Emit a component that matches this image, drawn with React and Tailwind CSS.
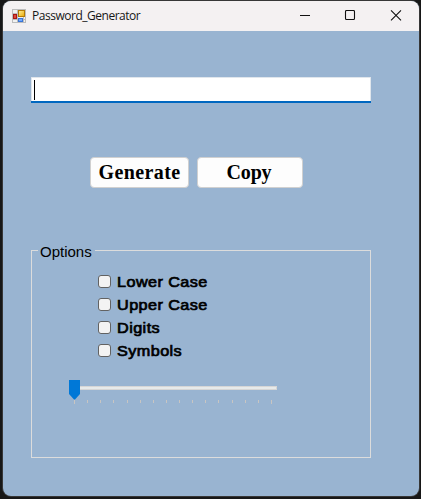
const OPTIONS = ['Lower Case', 'Upper Case', 'Digits', 'Symbols'];

function FormIcon() {
  return (
    <svg className="mb-[1px] h-[14px] w-[14px] shrink-0" viewBox="0 0 14 14">
      <defs>
        <linearGradient id="gold" x1="0" y1="0" x2="1" y2="1">
          <stop offset="0" stopColor="#fff0a0" />
          <stop offset="1" stopColor="#e8a800" />
        </linearGradient>
      </defs>
      <rect x="0.5" y="0.5" width="13" height="13" fill="#f1f1f1" stroke="#bcbcbc" />
      <path d="M5.5 0v14M0 4.5h6M0 10.5h14M11.5 8v6" stroke="#bcbcbc" fill="none" />
      <rect x="1.5" y="5.5" width="3" height="4" fill="#db4938" stroke="#a81717" />
      <rect x="6.5" y="1.5" width="6" height="6" fill="url(#gold)" stroke="#b47b07" />
      <rect x="6.5" y="9.5" width="4" height="3" fill="#71a9ff" stroke="#3a75d7" />
    </svg>
  );
}

function TitleBar() {
  return (
    <header className="flex h-[30px] shrink-0 items-center bg-[#f4f1f2] pl-[9px]">
      <FormIcon />
      <span className="ml-[6px] font-['Open_Sans','Noto_Sans',sans-serif] text-[12px] leading-[30px] tracking-[-0.48px] text-[#171717]">
        Password_Generator
      </span>
      <div className="ml-auto flex h-full items-center pr-[17px]">
        <svg className="h-3 w-[12px]" viewBox="0 0 12 12" fill="none" stroke="#111">
          <path d="M1 5.5h10" />
        </svg>
        <svg className="ml-[33px] h-3 w-3" viewBox="0 0 12 12" fill="none" stroke="#111" strokeWidth="1.1">
          <rect x="1.5" y="0.5" width="9" height="9" rx="1" />
        </svg>
        <svg className="ml-[34px] h-3 w-3" viewBox="0 0 12 12" fill="none" stroke="#111" strokeWidth="1.1">
          <path d="M1 0.4l10 10M11 0.4L1 10.4" />
        </svg>
      </div>
    </header>
  );
}

function Slider() {
  return (
    <div className="ml-[37px] mt-[18px] w-[209px]">
      <div className="flex h-[20px]">
        <svg className="h-[20px] w-[11px]" viewBox="0 0 11 20">
          <path d="M0 0h11v14l-5 5.5h-1L0 14z" fill="#0078d7" />
        </svg>
        <div className="mt-[6px] h-1 w-[197px] border border-l-0 border-[#d6d6d6] bg-[#e7eaea]" />
      </div>
      <svg className="h-[5px] w-[209px]" viewBox="0 0 209 5" shapeRendering="crispEdges">
        {Array.from({ length: 16 }, (_, i) => (
          <rect
            key={i}
            x={5 + Math.round((i * 197) / 15)}
            y="0"
            width="1"
            height={i === 0 || i === 15 ? 4 : 3}
            fill="#c8c5c2"
          />
        ))}
      </svg>
    </div>
  );
}

export default function App() {
  return (
    <div className="h-[499px] w-[421px] bg-[#171717] pl-[2px]">
      <div className="h-[497px] w-[418px] rounded-[9px] border border-t-0 border-[#373737] bg-[#373737] pt-[1px]">
        <div className="flex h-full flex-col overflow-hidden rounded-[8px] bg-[#99b4d1]">
          <TitleBar />
          <main className="flex flex-1 flex-col pl-[28px] pt-[46px]">
            <div className="flex w-[340px] flex-col">
              <div className="flex h-[24px] rounded-t-[1px] border border-b-0 border-[#e0e6ec] bg-white pl-[2px] pt-[2px]">
                <div className="h-[20px] w-px bg-black" />
              </div>
              <div className="h-[2px] bg-[#0067c0]" />
            </div>
            <div className="ml-[59px] mt-[54px] flex gap-2 font-['Liberation_Serif',serif] text-[20px] font-bold leading-[29px] text-black">
              <button className="flex h-[31px] w-[99px] justify-center rounded-[4px] border border-[#d0d0d0] bg-[#fdfdfd]">
                <span className="tracking-[0.4px]">Generate</span>
              </button>
              <button className="flex h-[31px] w-[106px] justify-center rounded-[4px] border border-[#d0d0d0] bg-[#fdfdfd]">
                <span className="pr-[2px] tracking-[-0.2px]">Copy</span>
              </button>
            </div>
            <fieldset className="mt-[53px] flex h-[217px] w-[340px] flex-col border border-[#dcdcdc] font-['Liberation_Sans',sans-serif] text-[15px] text-black">
              <legend className="ml-[6px] h-[18px] pl-[2px] pr-[3px] leading-[22px]">Options</legend>
              <div className="ml-[66px] mt-[11px] flex flex-col">
                {OPTIONS.map((label) => (
                  <label key={label} className="flex h-[23px] items-center">
                    <input
                      type="checkbox"
                      className="h-[13px] w-[13px] appearance-none rounded-[3px] border border-[#626262] bg-[#f3f3f3]"
                    />
                    <span className="ml-[6px] origin-left scale-x-[1.08] text-[15px] leading-[23px] tracking-[0.4px] [-webkit-text-stroke:0.7px_black]">
                      {label}
                    </span>
                  </label>
                ))}
              </div>
              <Slider />
            </fieldset>
          </main>
        </div>
      </div>
    </div>
  );
}
